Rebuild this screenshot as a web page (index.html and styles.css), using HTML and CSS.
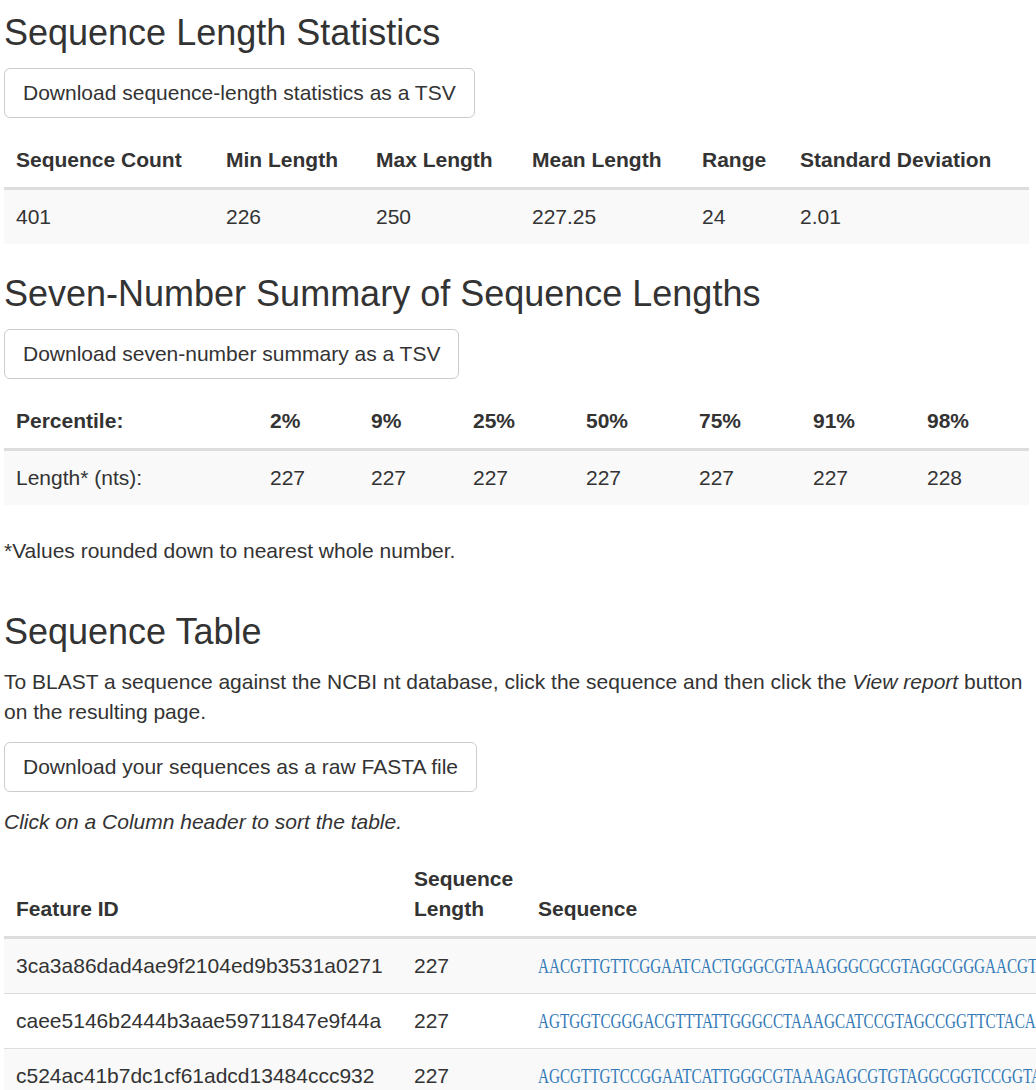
FILE: index.html
```html
<!DOCTYPE html>
<html lang="en">
<head>
<meta charset="utf-8">
<title>Sequence Length Statistics</title>
<link rel="stylesheet" href="styles.css">
</head>
<body>
<main class="page">
  <section class="section">
    <h3 class="title first">Sequence Length Statistics</h3>
    <div class="actions"><button class="btn" type="button">Download sequence-length statistics as a TSV</button></div>
    <table class="table striped fixed">
      <thead>
        <tr>
          <th class="w210">Sequence Count</th>
          <th class="w150">Min Length</th>
          <th class="w156">Max Length</th>
          <th class="w170">Mean Length</th>
          <th class="w98">Range</th>
          <th class="w241">Standard Deviation</th>
        </tr>
      </thead>
      <tbody>
        <tr><td>401</td><td>226</td><td>250</td><td>227.25</td><td>24</td><td>2.01</td></tr>
      </tbody>
    </table>
  </section>

  <section class="section">
    <h3 class="title">Seven-Number Summary of Sequence Lengths</h3>
    <div class="actions"><button class="btn" type="button">Download seven-number summary as a TSV</button></div>
    <table class="table striped fixed percentiles">
      <thead>
        <tr>
          <th class="w254">Percentile:</th>
          <th class="w101">2%</th>
          <th class="w102">9%</th>
          <th class="w113">25%</th>
          <th class="w113">50%</th>
          <th class="w114">75%</th>
          <th class="w114">91%</th>
          <th class="w114">98%</th>
        </tr>
      </thead>
      <tbody>
        <tr><td>Length* (nts):</td><td>227</td><td>227</td><td>227</td><td>227</td><td>227</td><td>227</td><td>228</td></tr>
      </tbody>
    </table>
    <p class="note">*Values rounded down to nearest whole number.</p>
  </section>

  <section class="section">
    <h3 class="title">Sequence Table</h3>
    <p class="text">To BLAST a sequence against the NCBI nt database, click the sequence and then click the <em>View report</em> button on the resulting page.</p>
    <div class="actions"><button class="btn" type="button">Download your sequences as a raw FASTA file</button></div>
    <p class="text"><em>Click on a Column header to sort the table.</em></p>
    <table class="table striped seqs">
      <thead>
        <tr>
          <th class="w398">Feature ID</th>
          <th class="w124">Sequence Length</th>
          <th>Sequence</th>
        </tr>
      </thead>
      <tbody>
        <tr>
          <td>3ca3a86dad4ae9f2104ed9b3531a0271</td>
          <td>227</td>
          <td class="seq"><a class="seq-link" href="#"><span class="seq-text">AACGTTGTTCGGAATCACTGGGCGTAAAGGGCGCGTAGGCGGGAACGTAAGTCAGTGGTGAAATCTCCGGGC</span></a></td>
        </tr>
        <tr>
          <td>caee5146b2444b3aae59711847e9f44a</td>
          <td>227</td>
          <td class="seq"><a class="seq-link" href="#"><span class="seq-text">AGTGGTCGGGACGTTTATTGGGCCTAAAGCATCCGTAGCCGGTTCTACAAGTCTTCCGTTAAATCCACCTGC</span></a></td>
        </tr>
        <tr>
          <td>c524ac41b7dc1cf61adcd13484ccc932</td>
          <td>227</td>
          <td class="seq"><a class="seq-link" href="#"><span class="seq-text">AGCGTTGTCCGGAATCATTGGGCGTAAAGAGCGTGTAGGCGGTCCGGTAAGTCGGCTGTGAAAGTCCAGGGC</span></a></td>
        </tr>
      </tbody>
    </table>
  </section>
</main>
</body>
</html>
```

FILE: styles.css
```css
html {
  scrollbar-width: none;
}
html::-webkit-scrollbar,
body::-webkit-scrollbar {
  display: none;
}

body {
  margin: 0;
  overflow-x: hidden;
  background: #fff;
  color: #333;
  font-family: "Liberation Sans", Arial, sans-serif;
  font-size: 21px;
  line-height: 30px;
}

.page {
  width: 1025px;
  margin-left: 4px;
}

.title {
  margin: 30px 0 15px;
  font-size: 36px;
  font-weight: 500;
  line-height: 40px;
}

.title.first {
  margin-top: 13px;
}

.actions {
  margin: 0 0 15px;
}

.btn {
  display: inline-block;
  margin: 0;
  padding: 9px 18px;
  border: 1px solid #ccc;
  border-radius: 6px;
  background: #fff;
  color: #333;
  font-family: inherit;
  font-size: 21px;
  line-height: 30px;
  font-weight: 400;
  vertical-align: middle;
  cursor: pointer;
}

.text {
  margin: 0 0 15px;
}

.note {
  margin: 0 0 46px;
}

.table {
  border-collapse: collapse;
  border-spacing: 0;
  margin-bottom: 30px;
}

.percentiles {
  margin-bottom: 31px;
}

.fixed {
  width: 100%;
  table-layout: fixed;
}

.table th,
.table td {
  box-sizing: border-box;
  padding: 12px;
  text-align: left;
  line-height: 30px;
}

.table th {
  font-weight: 700;
  vertical-align: bottom;
  border-bottom: 3px solid #ddd;
}

.table td {
  vertical-align: top;
  border-top: 1px solid #ddd;
  white-space: nowrap;
}

.table tbody tr:first-child td {
  border-top: 0;
}

.striped tbody tr:nth-child(odd) {
  background: #f9f9f9;
}

.w210 { width: 210px; }
.w150 { width: 150px; }
.w156 { width: 156px; }
.w170 { width: 170px; }
.w98 { width: 98px; }
.w241 { width: 241px; }
.w254 { width: 254px; }
.w101 { width: 101px; }
.w102 { width: 102px; }
.w113 { width: 113px; }
.w114 { width: 114px; }
.w398 { width: 398px; min-width: 398px; }
.w124 { width: 124px; min-width: 124px; }

.seqs {
  width: auto;
}

.seq-link {
  color: #337ab7;
  text-decoration: none;
}

.seq-text {
  display: inline-block;
  font-family: "Liberation Serif", "Times New Roman", serif;
  font-size: 22px;
  transform: scaleX(0.69);
  transform-origin: left center;
}
```
